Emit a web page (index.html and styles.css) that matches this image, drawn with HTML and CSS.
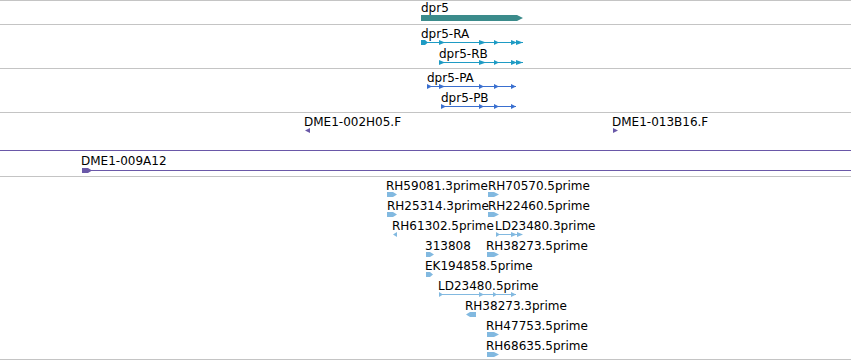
FILE: index.html
```html
<!DOCTYPE html>
<html lang="en">
<head>
    <meta charset="UTF-8">
    <title>dpr5 region</title>
    <link rel="stylesheet" href="styles.css">
</head>
<body>

<div class="tracks">
    <!-- Gene -->
    <div class="track track-gene">
        <svg class="glyphs" width="851" height="23">
            <polygon class="gene" points="421,14 517,14 523,17 517,20 421,20"/>
        </svg>
        <span class="label" style="left:421px;top:0px">dpr5</span>
    </div>

    <!-- Transcripts -->
    <div class="track track-tx">
        <svg class="glyphs" width="851" height="43">
            <g class="tx">
                <line x1="421" y1="17.5" x2="523" y2="17.5"/>
                <polygon points="421,15 425,15 428,17.5 425,20 421,20"/>
                <polygon points="439,15 445,17.5 439,20"/>
                <polygon points="479,15 486,17.5 479,20"/>
                <polygon points="494,15 499,17.5 494,20"/>
                <polygon points="511,15 517,17.5 511,20"/>
                <polygon points="516,15 523,17.5 516,20"/>

                <line x1="439" y1="37.5" x2="523" y2="37.5"/>
                <polygon points="439,35 445,37.5 439,40"/>
                <polygon points="479,35 486,37.5 479,40"/>
                <polygon points="494,35 499,37.5 494,40"/>
                <polygon points="511,35 517,37.5 511,40"/>
                <polygon points="516,35 523,37.5 516,40"/>
            </g>
        </svg>
        <span class="label" style="left:421px;top:2px">dpr5-RA</span>
        <span class="label" style="left:439px;top:22px">dpr5-RB</span>
    </div>

    <!-- Proteins -->
    <div class="track track-pp">
        <svg class="glyphs" width="851" height="43">
            <g class="pp">
                <line x1="427" y1="17.5" x2="516" y2="17.5"/>
                <polygon points="427,15 432,17.5 427,20"/>
                <polygon points="439,15 445,17.5 439,20"/>
                <polygon points="479,15 484,17.5 479,20"/>
                <polygon points="494,15 499,17.5 494,20"/>
                <polygon points="511,15 516,17.5 511,20"/>

                <line x1="441" y1="37.5" x2="516" y2="37.5"/>
                <polygon points="441,35 446,37.5 441,40"/>
                <polygon points="479,35 484,37.5 479,40"/>
                <polygon points="494,35 499,37.5 494,40"/>
                <polygon points="511,35 516,37.5 511,40"/>
            </g>
        </svg>
        <span class="label" style="left:427px;top:2px">dpr5-PA</span>
        <span class="label" style="left:441px;top:22px">dpr5-PB</span>
    </div>

    <!-- BAC ends -->
    <div class="track track-bac">
        <svg class="glyphs" width="851" height="63">
            <g class="bac">
                <polygon points="310,15 310,20 305,17.5"/>
                <polygon points="613,15 618,17.5 613,20"/>
                <line x1="0" y1="37.5" x2="851" y2="37.5"/>
                <line x1="82" y1="57.5" x2="851" y2="57.5"/>
                <polygon points="82,55 88,55 92,57.5 88,60 82,60"/>
            </g>
        </svg>
        <span class="label" style="left:304px;top:2px">DME1-002H05.F</span>
        <span class="label" style="left:612px;top:2px">DME1-013B16.F</span>
        <span class="label" style="left:81px;top:41px">DME1-009A12</span>
    </div>

    <!-- ESTs -->
    <div class="track track-est">
        <svg class="glyphs" width="851" height="182">
            <g class="est">
                <polygon points="387,15 393,15 397,17.5 393,20 387,20"/>
                <polygon points="488,15 494,15 499,17.5 494,20 488,20"/>

                <polygon points="387,35 393,35 397,37.5 393,40 387,40"/>
                <polygon points="488,35 494,35 499,37.5 494,40 488,40"/>

                <polygon points="397,55 397,60 393,57.5"/>
                <line x1="496" y1="57.5" x2="522" y2="57.5"/>
                <polygon points="496,55 500,57.5 496,60"/>
                <polygon points="511,55 517,57.5 511,60"/>
                <polygon points="517,55 523,57.5 517,60"/>

                <polygon points="426,75 430,75 434,77.5 430,80 426,80"/>
                <polygon points="487,75 494,75 499,77.5 494,80 487,80"/>

                <polygon points="426,95 430,95 433,97.5 430,100 426,100"/>

                <line x1="439" y1="117.5" x2="516" y2="117.5"/>
                <polygon points="439,115 443,117.5 439,120"/>
                <polygon points="479,115 484,117.5 479,120"/>
                <polygon points="493,115 497,117.5 493,120"/>
                <polygon points="511,115 516,117.5 511,120"/>

                <polygon points="476,135 470,135 466,137.5 470,140 476,140"/>
                <polygon points="487,155 494,155 499,157.5 494,160 487,160"/>
                <polygon points="487,175 494,175 499,177.5 494,180 487,180"/>
            </g>
        </svg>
        <span class="label" style="left:386px;top:2px">RH59081.3prime</span>
        <span class="label" style="left:488px;top:2px">RH70570.5prime</span>
        <span class="label" style="left:387px;top:22px">RH25314.3prime</span>
        <span class="label" style="left:488px;top:22px">RH22460.5prime</span>
        <span class="label" style="left:392px;top:42px">RH61302.5prime</span>
        <span class="label" style="left:495px;top:42px">LD23480.3prime</span>
        <span class="label" style="left:425px;top:62px">313808</span>
        <span class="label" style="left:486px;top:62px">RH38273.5prime</span>
        <span class="label" style="left:425px;top:82px">EK194858.5prime</span>
        <span class="label" style="left:438px;top:102px">LD23480.5prime</span>
        <span class="label" style="left:465px;top:122px">RH38273.3prime</span>
        <span class="label" style="left:486px;top:142px">RH47753.5prime</span>
        <span class="label" style="left:486px;top:162px">RH68635.5prime</span>
    </div>
</div>

</body>
</html>
```

FILE: styles.css
```css
body {
    margin: 0;
    background-color: white;
    font-family: "DejaVu Sans", Verdana, sans-serif;
    font-size: 12px;
    overflow: hidden;
}
.tracks {
    border-top: 1px solid #c4c4c4;
    width: 851px;
}
.track {
    position: relative;
    border-bottom: 1px solid #c4c4c4;
}
.track-gene { height: 23px; }
.track-tx   { height: 43px; }
.track-pp   { height: 43px; }
.track-bac  { height: 63px; }
.track-est  { height: 182px; }

/* glyph layer covers the whole track */
.glyphs {
    position: absolute;
    left: 0;
    top: 0;
    display: block;
}
.label {
    position: absolute;
    line-height: 14px;
    color: #000;
    white-space: nowrap;
}

.gene { fill: #3b8b8b; }
.tx line { stroke: #1e9bc4; stroke-width: 1; }
.tx polygon { fill: #1e9bc4; }
.pp line { stroke: #3a6fcf; stroke-width: 1; }
.pp polygon { fill: #3a6fcf; }
.bac line { stroke: #6a58a8; stroke-width: 1; }
.bac polygon { fill: #6a58a8; }
.est line { stroke: #82b9e0; stroke-width: 1; }
.est polygon { fill: #82b9e0; }
```
